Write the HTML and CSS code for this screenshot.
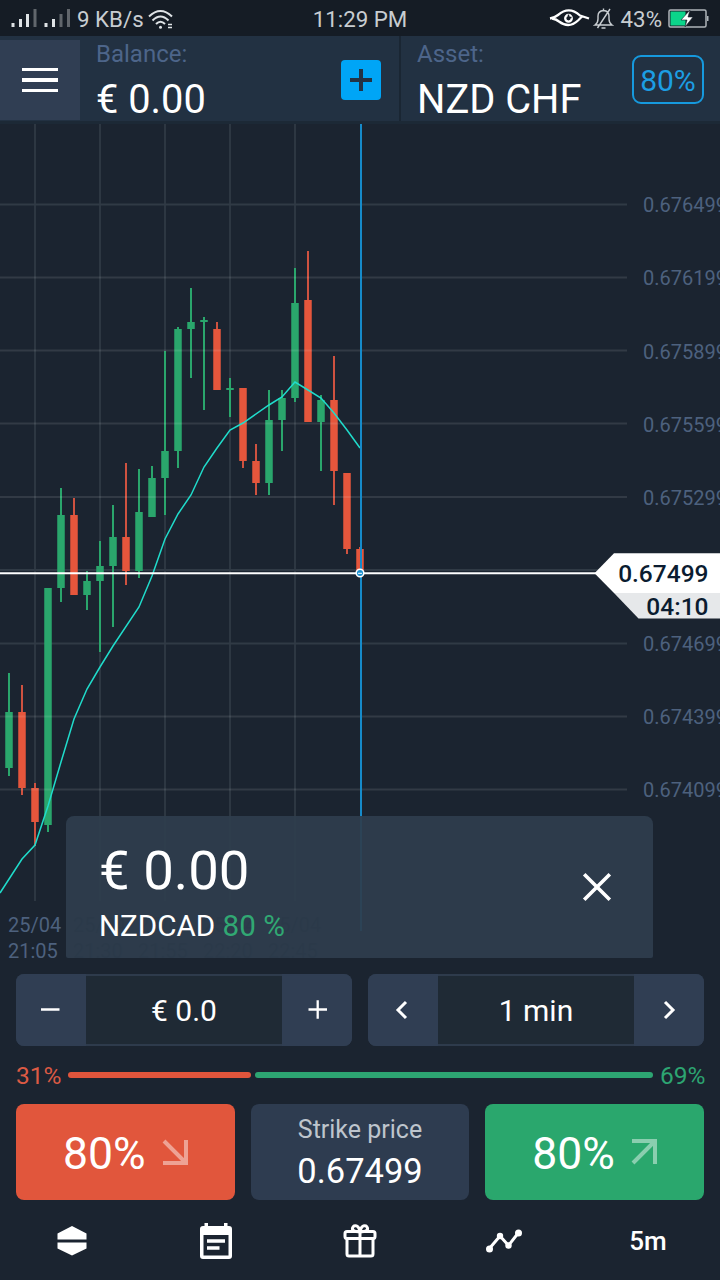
FILE: index.html
```html
<!DOCTYPE html>
<html lang="en">
<head>
<meta charset="utf-8">
<title>NZD CHF</title>
<link rel="stylesheet" href="styles.css">
</head>
<body>
<div class="app">
  <div class="status">
    <div class="status-left">
      <svg class="signals" width="62" height="20" viewBox="0 0 62 20">
        <g fill="#dfe3e6"><rect x="0.5" y="14" width="3" height="4"/><rect x="8" y="10" width="3" height="8"/><rect x="15" y="5" width="3" height="13"/><rect x="33.5" y="14" width="3" height="4"/><rect x="41" y="10" width="3" height="8"/></g>
        <g fill="#61666c"><rect x="22.500" y="0" width="3" height="18"/><rect x="48.500" y="5" width="3" height="13"/><rect x="56" y="0" width="3" height="18"/></g>
      </svg>
      <span>9 KB/s</span>
      <svg class="wifi" width="26" height="21" viewBox="0 0 26 21" fill="none" stroke="#dfe3e6" stroke-width="2">
        <path d="M1 7.500Q12.500-3.500 24 7.500M4.500 11.500Q12.500 3.500 20.500 11.500M8 15Q12.500 10.500 17 15"/><circle cx="12.500" cy="18.200" r="1.500" fill="#dfe3e6" stroke="none"/><path stroke-width="1.500" d="M20 15.500h4M20 18.500h4"/>
      </svg>
    </div>
    <div class="clock">11:29 PM</div>
    <div class="status-right">
      <svg width="42" height="20" viewBox="0 0 42 20" fill="none" stroke="#fff" stroke-width="2.300">
        <path d="M1 9.500Q6 8.500 9 6Q20-3.500 31 6.500L40 9.500M3 9.500Q7 10 10 12.500Q20 20 29 11.500L33 7.500"/><circle cx="19.500" cy="9.300" r="3.300"/><path d="M19.500 5.500v3h3" stroke="#151c25" stroke-width="1.500"/>
      </svg>
      <svg class="bell" width="21" height="22" viewBox="0 0 21 22" fill="none" stroke="#c8cdd1" stroke-width="1.400">
        <path d="M2 17h17q-3-2-3-6V8q0-5-5.500-5.500Q5 3 5 8v3q0 4-3 6zM8.500 20h4M17 1L4.500 20M10.500 0.500v2"/>
      </svg>
      <span>43%</span>
      <svg class="battery" width="42" height="20" viewBox="0 0 42 20">
        <rect x="1" y="1" width="37" height="17" rx="1.500" fill="none" stroke="#aeb4b9" stroke-width="1.500"/><rect x="2.500" y="2.500" width="15" height="14" fill="#0bd58a"/><rect x="39" y="7" width="1.500" height="5" fill="#aeb4b9"/><path d="M22 1l-9 10h6l-2 7 8-10h-5z" fill="#fff" stroke="#15202a" stroke-width=".6"/>
      </svg>
    </div>
  </div>

  <header class="header">
    <button class="menu" aria-label="Menu"><i></i><i></i><i></i></button>
    <section class="balance">
      <div><div class="label">Balance:</div><div class="amount">€ 0.00</div></div>
      <button class="add" aria-label="Add"><svg width="40" height="40" viewBox="0 0 40 40"><path d="M20 9v22M9 20h22" stroke="#233244" stroke-width="4"/></svg></button>
    </section>
    <section class="asset">
      <div><div class="label">Asset:</div><div class="amount">NZD CHF</div></div>
      <div class="percent">80%</div>
    </section>
  </header>

  <main class="chart">
    <svg class="plot" width="720" height="842" viewBox="0 124 720 842">
      <g class="grid">
        <path d="M35 124V901M100 124V901M165 124V901M230 124V901M295 124V901"/>
        <path d="M0 204.500H627M0 570H627M0 643.500H627"/>
      </g>
      <g class="up-wick"><path d="M9 673V776M48 588V832M61 488V602M87 571V610M100 541V652M113 505V627M139 469V578M152 466V517M165 351V515M178 327V468M191 288V378M204 317V410M230 378V417M269 390V495M282 390V451M295 268V402M321 395V471"/></g>
      <g class="down-wick"><path d="M22 685V795M35 783V846M74 498V595M126 463V585M217 322V390M243 388V468M256 444V495M308 251V422M334 356V505M347 473V554M360 547V573"/></g>
      <g class="up"><path d="M9 712V768M48 588V825M61 515V588M87 581V595M100 566V581M113 537V566M139 512V571M152 478V517M165 451V478M178 329V451M191 322V329M204 320V322M230 388V390M269 420V483M282 398V420M295 303V398M321 400V422"/></g>
      <g class="down"><path d="M22 712V788M35 788V822M74 515V595M126 537V571M217 329V390M243 388V461M256 461V483M308 300V422M334 400V471M347 473V549M360 549V573"/></g>
      <g class="grid faint"><path d="M0 277.500H627M0 350.500H627M0 423.500H627M0 497H627M0 716.500H627M0 789.500H627"/></g>
      <polyline class="average" points="0,893 22,859 35,845 48,806 61,762 74,719 87,689 100,667 113,646 139,607 152,576 165,539 178,514 191,495 204,467 217,448 230,430 243,423 269,405 282,397 295,382 308,390 321,398 334,413 347,430 360,448"/>
      <path class="now" d="M361 124V931"/>
      <path class="price-line" d="M0 573.300H600"/>
      <circle cx="360" cy="573" r="3.800" fill="#188fd0" stroke="#fff" stroke-width="1.600"/>
      <path d="M358 573.300h4" stroke="#fff"/>
      <g class="axis">
        <text x="643" y="212">0.676499</text><text x="643" y="285">0.676199</text><text x="643" y="358.500">0.675899</text><text x="643" y="431.500">0.675599</text><text x="643" y="504.500">0.675299</text><text x="643" y="651">0.674699</text><text x="643" y="724">0.674399</text><text x="643" y="797">0.674099</text>
        <text x="8" y="931.500">25/04</text><text x="8" y="958">21:05</text>
      </g>
      <g class="axis covered">
        <text x="73" y="931.500">25/04</text><text x="73" y="958">21:30</text><text x="138" y="931.500">25/04</text><text x="138" y="958">21:55</text><text x="203" y="931.500">25/04</text><text x="203" y="958">22:20</text><text x="268" y="931.500">25/04</text><text x="268" y="958">22:45</text>
      </g>
      <path d="M594.500 573.300L614 553.300H720V593H614z" fill="#fff"/>
      <path d="M614 593H720V618.500H638.500z" fill="#e6e8ea"/>
      <g class="tag"><text x="708.500" y="582">0.67499</text><text x="708.500" y="614.500">04:10</text></g>
    </svg>
    <div class="toast">
      <div class="toast-copy"><div class="toast-sum">€ 0.00</div><div class="toast-pair">NZDCAD <span>80 %</span></div></div>
      <svg width="30" height="30" viewBox="0 0 30 30"><path d="M2.200 2.200L27.800 27.800M27.800 2.200L2.200 27.800" stroke="#fff" stroke-width="3.600"/></svg>
    </div>
  </main>

  <div class="steppers">
    <div class="stepper">
      <button aria-label="Less"><svg width="20" height="20"><path d="M0 9.500H18.500" stroke="#fff" stroke-width="2.300"/></svg></button>
      <div class="value">€ 0.0</div>
      <button aria-label="More"><svg width="20" height="20"><path d="M1.500 9.500H20M10.700 .3V18.700" stroke="#fff" stroke-width="2.300"/></svg></button>
    </div>
    <div class="stepper">
      <button aria-label="Shorter"><svg width="20" height="20"><path d="M13 2L5 10L13 18" fill="none" stroke="#fff" stroke-width="3"/></svg></button>
      <div class="value">1 min</div>
      <button aria-label="Longer"><svg width="20" height="20"><path d="M6 2L14 10L6 18" fill="none" stroke="#fff" stroke-width="3"/></svg></button>
    </div>
  </div>

  <div class="mood"><span class="sell-text">31%</span><i class="sell-bar"></i><i class="buy-bar"></i><span class="buy-text">69%</span></div>

  <div class="trade">
    <button class="deal sell"><span>80%</span><svg width="26" height="26" viewBox="0 0 26 26"><path d="M2 2L23 23M24 1V24H1"/></svg></button>
    <div class="strike"><span>Strike price</span><b>0.67499</b></div>
    <button class="deal buy"><span>80%</span><svg width="26" height="26" viewBox="0 0 26 26"><path d="M2 24L23 3M24 25V2H1"/></svg></button>
  </div>

  <nav class="nav">
    <a><svg width="40" height="40" viewBox="0 0 40 40" fill="#fff"><path d="M5.500 18.500v-6L20 5l14.500 7.500v6zM5.500 21.500v6L20 34.500l14.500-7v-6z"/></svg></a>
    <a><svg width="40" height="40" viewBox="0 0 40 40"><path fill="#fff" fill-rule="evenodd" d="M8.500 2h3.500v3h16V2h3.500v3H33q3 0 3 3v27q0 3-3 3H7q-3 0-3-3V8q0-3 3-3h1.500zM7.500 14v20.500h25V14z"/><path stroke="#fff" stroke-width="3.500" d="M11 20H29M11 27H23.500"/></svg></a>
    <a><svg width="40" height="40" viewBox="0 0 40 40" fill="none" stroke="#fff" stroke-width="3"><rect x="5" y="10.500" width="30" height="7" rx="2"/><path d="M7 18V33q0 2 2 2H31q2 0 2-2V18M20 11V35"/><path d="M20 11C14 11 12 9 12.500 7C14 3 19 4 20 11C21 4 26 3 27.500 7C28 9 26 11 20 11z"/></svg></a>
    <a><svg width="40" height="40" viewBox="0 0 40 40" fill="#fff"><path d="M5 28L16 15L24.500 24.500L35 11" fill="none" stroke="#fff" stroke-width="3"/><circle cx="5.500" cy="28" r="3.500"/><circle cx="16" cy="15" r="3.200"/><circle cx="24.500" cy="24.500" r="3.200"/><circle cx="34.500" cy="12" r="3.500"/></svg></a>
    <a>5m</a>
  </nav>
</div>
</body>
</html>
```
FILE: styles.css
```css
* { box-sizing: border-box; }
body { margin: 0; background: #1b2430; color: #fff; font-family: Roboto, "Noto Sans", sans-serif; }
button { border: 0; padding: 0; color: inherit; font: inherit; display: flex; align-items: center; justify-content: center; }
svg { display: block; flex: none; }
.app { width: 720px; height: 1280px; overflow: hidden; display: flex; flex-direction: column; background: #1b2430; }

.status { height: 36px; flex: none; background: #151c25; color: #c8cdd1; font-size: 22.300px; line-height: 38px; display: grid; grid-template-columns: 1fr auto 1fr; padding: 0 11px; }
.status-left, .status-right { display: flex; align-items: center; }
.status-left span { margin-left: 4px; }
.wifi { margin-left: 4px; }
.status-right { justify-content: flex-end; }
.bell { margin: 0 7px 0 2px; }
.battery { margin-left: 6px; margin-right: -1px; }

.header { height: 88px; flex: none; display: flex; background: #223142; border-bottom: 3px solid #1c2936; }
.menu { width: 80px; height: 80px; margin-top: 4px; background: #303e53; flex-direction: column; gap: 7px; }
.menu i { width: 36px; height: 3.600px; background: #fff; }
.balance, .asset { display: flex; justify-content: space-between; padding: 0 16px; }
.balance { width: 321px; padding-right: 18px; border-right: 2px solid #1a2633; }
.asset { flex: 1; }
.label { color: #4d658a; font-size: 24px; line-height: 37px; }
.amount { font-size: 39.800px; line-height: 54px; white-space: nowrap; }
.add { width: 40px; height: 40px; margin-top: 24px; border-radius: 4px; background: #00a5f6; }
.percent { width: 72px; height: 49px; margin-top: 19px; border: 2px solid #1699dd; border-radius: 9px; color: #1c9ee4; font-size: 30px; line-height: 48px; text-align: center; }

.chart { height: 842px; flex: none; position: relative; }
.grid { stroke: #303a45; stroke-width: 1.800; fill: none; }
.grid.faint { stroke: #fff; opacity: .1; }
.up, .up-wick { stroke: #2aa66c; }
.down, .down-wick { stroke: #e5563c; }
.up, .down { stroke-width: 7.500; }
.up-wick, .down-wick { stroke-width: 2; }
.down-wick { stroke: #cf5240; }
.average { fill: none; stroke: #20dccb; stroke-width: 1.500; }
.now { stroke: #168bca; stroke-width: 2; }
.price-line { stroke: #fff; stroke-width: 2; }
.axis { font-size: 20px; fill: #4d617e; }
.axis.covered { fill: #000a14; }
.tag { font-size: 24.500px; font-weight: 500; fill: #0b1c30; text-anchor: end; }
.toast { position: absolute; left: 66px; top: 692px; width: 587px; height: 142px; padding: 0 41px 0 33px; display: flex; align-items: center; justify-content: space-between; border-radius: 8px 8px 2px 2px; background: rgba(46, 61, 77, .93); }
.toast-copy { padding-top: 13px; }
.toast-sum { font-size: 54.500px; line-height: 64px; }
.toast-pair { font-size: 29.600px; line-height: 48px; }
.toast-pair span { color: #31a873; }

.steppers { flex: none; display: flex; gap: 16px; padding: 8px 16px 0; }
.stepper { flex: 1; height: 72px; display: flex; background: #2e3b4c; border-radius: 8px; overflow: hidden; }
.stepper button { width: 70px; background: #303e53; }
.stepper .value { flex: 1; margin: 2px 0; background: #1f2a35; font-size: 30px; line-height: 70px; text-align: center; }

.mood { height: 58px; flex: none; display: flex; align-items: center; padding: 0 15px 0 16px; font-size: 24.500px; line-height: 30px; }
.mood i { height: 6px; border-radius: 3px; }
.sell-text, .buy-text { width: 52px; padding-top: 1px; }
.buy-text { width: 45px; margin-left: 7px; }
.sell-text { color: #dc5a44; }
.buy-text { color: #2da572; }
.sell-bar { width: 183px; background: #e0553c; }
.buy-bar { flex: 1; margin-left: 4px; background: #2da572; }

.trade { height: 96px; flex: none; display: grid; grid-template-columns: repeat(3, 1fr); gap: 16px; padding: 0 16px; }
.deal { border-radius: 8px; font-size: 44.500px; gap: 16px; }
.deal span { padding-top: 4px; }
.deal path { fill: none; stroke: #fff; stroke-opacity: .45; stroke-width: 4; }
.sell { background: #e1563c; }
.buy { background: #2aa76d; }
.strike { border-radius: 8px; background: #2e3c50; display: flex; flex-direction: column; align-items: center; }
.strike span { color: #bec5cd; font-size: 25px; line-height: 30px; margin-top: 11px; }
.strike b { font-size: 34.500px; font-weight: 400; line-height: 52px; }

.nav { height: 80px; flex: none; display: grid; grid-template-columns: repeat(5, 1fr); }
.nav a { display: flex; align-items: center; justify-content: center; font-size: 26px; font-weight: 500; padding-top: 1px; }
```
